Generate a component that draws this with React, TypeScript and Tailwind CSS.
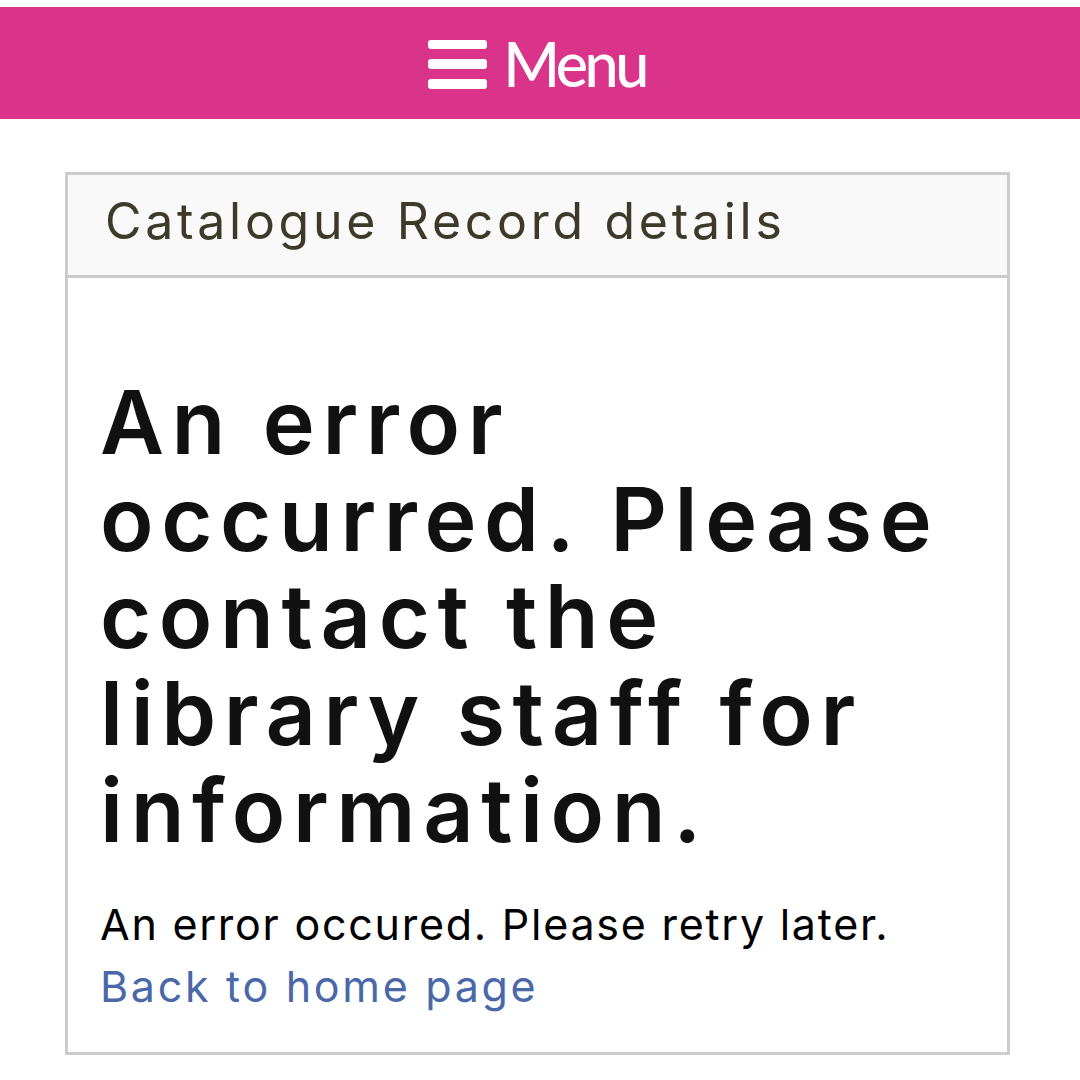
import React from "react";

export default function App() {
  return (
    <div className="min-h-[1080px] w-[1080px] bg-white" style={{ fontFamily: "Inter, 'Noto Sans', sans-serif" }}>
      <div className="h-[7px] bg-white" />
      <div className="flex h-[112px] items-center justify-center gap-[16px] bg-[#d9348a] pr-[6px]">
        <div className="flex flex-col gap-[10px] pt-[2px]">
          <span className="block h-[9px] w-[59px] rounded-[3px] bg-white" />
          <span className="block h-[10px] w-[59px] rounded-[3px] bg-white" />
          <span className="block h-[10px] w-[59px] rounded-[3px] bg-white" />
        </div>
        <span className="text-[61px] font-medium leading-none tracking-[-3.5px] text-white" style={{ fontFamily: "Lato, sans-serif" }}>
          Menu
        </span>
      </div>
      <div className="ml-[65px] mt-[53px] w-[945px] border-[3px] border-[#cccccc]">
        <div className="flex h-[103px] items-center border-b-[3px] border-[#cccccc] bg-[#f9f9f9] px-[37px] pb-[8px]">
          <span className="text-[50px] leading-none tracking-[3.7px] text-[#3d3a2a]">Catalogue Record details</span>
        </div>
        <div className="px-[32px] pb-[35px] pt-[96px]">
          <h1 className="text-[88px] font-semibold leading-[97px] tracking-[7.6px] text-[#111111]">
            An error occurred. Please contact the library staff for information.
          </h1>
          <p className="mt-[34px] text-[43px] leading-[62px] tracking-[1.75px] text-black">An error occured. Please retry later.</p>
          <a className="block text-[43px] leading-[62px] tracking-[2.7px] text-[#4a68a8]" href="#">Back to home page</a>
        </div>
      </div>
    </div>
  );
}
